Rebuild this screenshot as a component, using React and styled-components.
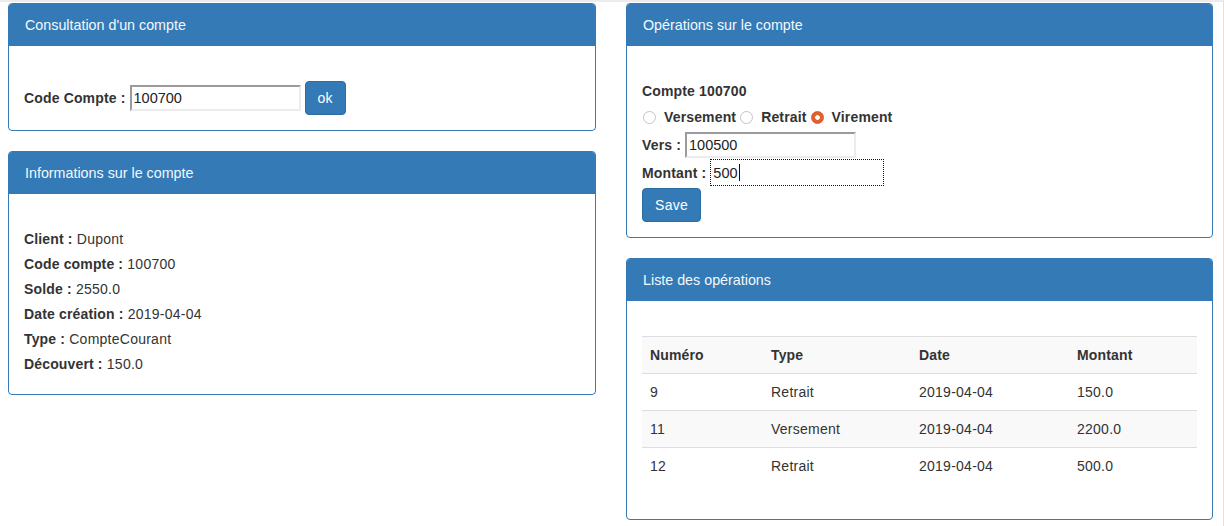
import React from "react";
import styled, { createGlobalStyle } from "styled-components";

const GlobalStyle = createGlobalStyle`
  body {
    margin: 0;
    background: #fff;
    font-family: "Liberation Sans", Arial, sans-serif;
    font-size: 14px;
    line-height: 20px;
    letter-spacing: 0.25px;
    color: #333;
  }
`;

const Page = styled.div`
  box-sizing: border-box;
  width: 1224px;
  min-height: 526px;
  border-top: 2px solid #ececec;
  border-right: 1px solid #f2dccf;
  padding: 1px 0 0 8px;
  display: grid;
  grid-template-columns: 588px 587px;
  column-gap: 30px;
  align-items: start;
`;

const Column = styled.div`
  display: flex;
  flex-direction: column;
  gap: 20px;
`;

const Panel = styled.div`
  border: 1px solid #337ab7;
  border-radius: 4px;
  background: #fff;
`;

const PanelHeading = styled.div`
  background: #337ab7;
  color: #f4f8fc;
  font-size: 14.3px;
  line-height: 22px;
  letter-spacing: 0;
  padding: 10px 16px;
  border-radius: 3px 3px 0 0;
`;

const PanelBody = styled.div`
  padding: 35px 15px 15px;
`;

const InlineRow = styled.div`
  display: flex;
  align-items: center;
  gap: 4px;
  margin-bottom: ${(p) => p.$mb || 0}px;
`;

const Label = styled.span`
  font-weight: bold;
  white-space: nowrap;
  letter-spacing: 0.15px;
`;

const Field = styled.div`
  box-sizing: border-box;
  width: ${(p) => (p.$focused ? 174 : 171)}px;
  height: ${(p) => (p.$focused ? 27 : 26)}px;
  padding: 0 2px;
  display: flex;
  align-items: center;
  font-size: 14.5px;
  letter-spacing: 0;
  color: #222;
  background: #fff;
  border-width: ${(p) => (p.$focused ? "1px" : "2px")};
  border-color: ${(p) =>
    p.$focused ? "#111" : "#9b9b9b #ececec #ececec #9b9b9b"};
  border-style: ${(p) => (p.$focused ? "dotted" : "solid")};
`;

const Caret = styled.span`
  display: inline-block;
  width: 1px;
  height: 17px;
  margin-left: 1px;
  background: #111;
`;

const Button = styled.button`
  font-family: inherit;
  font-size: 14px;
  line-height: 20px;
  color: #fff;
  background: #337ab7;
  border: 1px solid #2e6da4;
  border-radius: 4px;
  padding: 6px 12px;
  letter-spacing: 0.3px;
  cursor: pointer;
`;

const InfoLine = styled.div`
  margin-bottom: 5px;
`;

const Title = styled.div`
  font-weight: bold;
  letter-spacing: 0.15px;
  margin-bottom: 6px;
`;

const RadioGroup = styled.div`
  display: flex;
  align-items: center;
  margin-bottom: 5px;
  padding-left: 1px;
`;

const RadioLabel = styled.label`
  display: flex;
  align-items: center;
  gap: 8px;
  font-weight: bold;
  letter-spacing: 0.15px;
  margin-right: 4px;
`;

const RadioDot = styled.span`
  box-sizing: border-box;
  width: 13px;
  height: 13px;
  border-radius: 50%;
  border: 1px solid ${(p) => (p.$checked ? "#d9582e" : "#c4c4c4")};
  background: ${(p) =>
    p.$checked
      ? "radial-gradient(circle, #fff 0 2px, #e0602f 2.6px)"
      : "#fff"};
`;

const Table = styled.table`
  width: 555px;
  margin-top: 20px;
  margin-bottom: 20px;
  table-layout: fixed;
  border-collapse: collapse;
  border-spacing: 0;
`;

const Th = styled.th`
  box-sizing: border-box;
  text-align: left;
  font-weight: bold;
  letter-spacing: 0.15px;
  padding: 8px;
  line-height: 20px;
  border-top: 1px solid #ddd;
  border-bottom: 1px solid #ddd;
  width: ${(p) => p.$w}px;
`;

const Tr = styled.tr`
  background: ${(p) => (p.$striped ? "#f9f9f9" : "transparent")};
`;

const HeadRow = styled.tr`
  background: #f9f9f9;
`;

const Td = styled.td`
  padding: 8px;
  line-height: 20px;
  border-top: ${(p) => (p.$first ? "0" : "1px solid #ddd")};
`;

const TableBody = styled(PanelBody)`
  padding: 15px;
`;

const infos = [
  ["Client", "Dupont"],
  ["Code compte", "100700"],
  ["Solde", "2550.0"],
  ["Date création", "2019-04-04"],
  ["Type", "CompteCourant"],
  ["Découvert", "150.0"],
];

const operations = [
  { num: "9", type: "Retrait", date: "2019-04-04", montant: "150.0" },
  { num: "11", type: "Versement", date: "2019-04-04", montant: "2200.0" },
  { num: "12", type: "Retrait", date: "2019-04-04", montant: "500.0" },
];

export default function App() {
  return (
    <>
      <GlobalStyle />
      <Page>
        <Column>
          <Panel>
            <PanelHeading>Consultation d'un compte</PanelHeading>
            <PanelBody>
              <InlineRow>
                <Label>Code Compte :</Label>
                <Field>100700</Field>
                <Button>ok</Button>
              </InlineRow>
            </PanelBody>
          </Panel>

          <Panel>
            <PanelHeading>Informations sur le compte</PanelHeading>
            <PanelBody>
              {infos.map(([k, v]) => (
                <InfoLine key={k}>
                  <Label>{k} :</Label> {v}
                </InfoLine>
              ))}
            </PanelBody>
          </Panel>
        </Column>

        <Column>
          <Panel>
            <PanelHeading>Opérations sur le compte</PanelHeading>
            <PanelBody>
              <Title>Compte 100700</Title>
              <RadioGroup>
                <RadioLabel>
                  <RadioDot />
                  Versement
                </RadioLabel>
                <RadioLabel>
                  <RadioDot />
                  Retrait
                </RadioLabel>
                <RadioLabel>
                  <RadioDot $checked />
                  Virement
                </RadioLabel>
              </RadioGroup>
              <InlineRow $mb={1}>
                <Label>Vers :</Label>
                <Field>100500</Field>
              </InlineRow>
              <InlineRow $mb={2}>
                <Label>Montant :</Label>
                <Field $focused>
                  500
                  <Caret />
                </Field>
              </InlineRow>
              <Button>Save</Button>
            </PanelBody>
          </Panel>

          <Panel>
            <PanelHeading>Liste des opérations</PanelHeading>
            <TableBody>
              <Table>
                <thead>
                  <HeadRow>
                    <Th $w={121}>Numéro</Th>
                    <Th $w={148}>Type</Th>
                    <Th $w={158}>Date</Th>
                    <Th $w={128}>Montant</Th>
                  </HeadRow>
                </thead>
                <tbody>
                  {operations.map((op, i) => (
                    <Tr key={op.num} $striped={i % 2 === 1}>
                      <Td $first={i === 0}>{op.num}</Td>
                      <Td $first={i === 0}>{op.type}</Td>
                      <Td $first={i === 0}>{op.date}</Td>
                      <Td $first={i === 0}>{op.montant}</Td>
                    </Tr>
                  ))}
                </tbody>
              </Table>
            </TableBody>
          </Panel>
        </Column>
      </Page>
    </>
  );
}
